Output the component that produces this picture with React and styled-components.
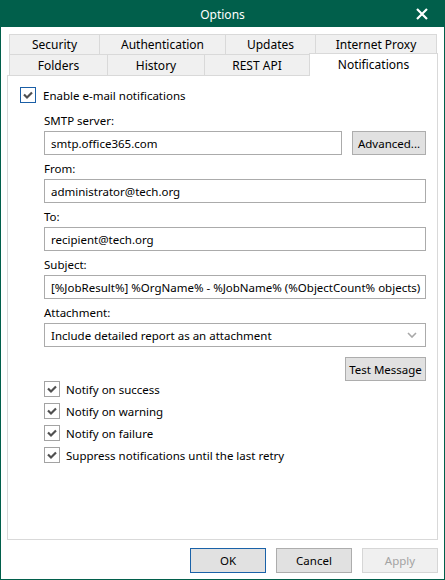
import React from "react";
import styled, { createGlobalStyle } from "styled-components";

const Global = createGlobalStyle`
  html, body { margin: 0; padding: 0; background: #ffffff; }
  body { font-family: "Noto Sans", "Open Sans", sans-serif; font-size: 11.5px; color: #000; }
  * { box-sizing: border-box; }
`;

const topTabs = [
  { label: "Security", w: 91 },
  { label: "Authentication", w: 127 },
  { label: "Updates", w: 91 },
  { label: "Internet Proxy", w: 122 },
];

const bottomTabs = [
  { label: "Folders", w: 99 },
  { label: "History", w: 98 },
  { label: "REST API", w: 106 },
  { label: "Notifications", w: 129, active: true },
];

const notifyOptions = [
  "Notify on success",
  "Notify on warning",
  "Notify on failure",
  "Suppress notifications until the last retry",
];

const Check = ({ focused }) => (
  <Box $focused={focused}>
    <svg width="14" height="14" viewBox="0 0 14 14">
      <polyline points="3,6.5 6,9.5 11,4.5" fill="none" stroke="#505050" strokeWidth="2.2" />
    </svg>
  </Box>
);

const App = () => {
  return (
    <>
      <Global />
      <Window>
        <TitleBar>
          <Title>Options</Title>
          <Close>
            <svg width="12" height="12" viewBox="0 0 12 12">
              <path d="M1 1 L11 11 M11 1 L1 11" stroke="#fff" strokeWidth="2.2" />
            </svg>
          </Close>
        </TitleBar>
        <Body>
          <Tabs>
            <TabRow>
              {topTabs.map((t) => (
                <Tab key={t.label} $w={t.w}>{t.label}</Tab>
              ))}
            </TabRow>
            <TabRow $second>
              {bottomTabs.map((t) => (
                <Tab key={t.label} $w={t.w} $second $active={t.active}>{t.label}</Tab>
              ))}
            </TabRow>
          </Tabs>
          <Panel>
            <CheckRow>
              <Check focused />
              <CheckLabel>Enable e-mail notifications</CheckLabel>
            </CheckRow>
            <Fields>
              <Label>SMTP server:</Label>
              <InlineRow>
                <Input $grow>smtp.office365.com</Input>
                <Button $w={74}>Advanced...</Button>
              </InlineRow>
              <Label>From:</Label>
              <Input>administrator@tech.org</Input>
              <Label>To:</Label>
              <Input>recipient@tech.org</Input>
              <Label>Subject:</Label>
              <Input>[%JobResult%] %OrgName% - %JobName% (%ObjectCount% objects)</Input>
              <Label>Attachment:</Label>
              <Select>
                <span>Include detailed report as an attachment</span>
                <svg width="10" height="6" viewBox="0 0 10 6">
                  <polyline points="1,1 5,5 9,1" fill="none" stroke="#a8a8a8" strokeWidth="1.6" />
                </svg>
              </Select>
              <ButtonRow>
                <Button $w={81}>Test Message</Button>
              </ButtonRow>
              <CheckList>
                {notifyOptions.map((o) => (
                  <CheckRow key={o} $list>
                    <Check />
                    <CheckLabel>{o}</CheckLabel>
                  </CheckRow>
                ))}
              </CheckList>
            </Fields>
          </Panel>
          <Footer>
            <Button $w={76} $h={25} $primary>OK</Button>
            <Button $w={76} $h={25}>Cancel</Button>
            <Button $w={76} $h={25} disabled>Apply</Button>
          </Footer>
        </Body>
      </Window>
    </>
  );
};

const Window = styled.div`
  width: 445px;
  height: 580px;
  display: flex;
  flex-direction: column;
  border: 1px solid #015f4b;
  border-top: none;
  background: #ffffff;
`;

const TitleBar = styled.div`
  height: 27px;
  margin: 0 -1px;
  background: #015f4b;
  color: #ffffff;
  display: flex;
  align-items: center;
  justify-content: center;
  position: relative;
`;

const Title = styled.div`
  font-size: 12px;
  padding-top: 1px;
`;

const Close = styled.div`
  position: absolute;
  right: 17px;
  top: 8px;
  width: 12px;
  height: 12px;
  display: flex;
`;

const Body = styled.div`
  flex: 1;
  display: flex;
  flex-direction: column;
  padding: 7px 6px 6px 6px;
`;

const Tabs = styled.div`
  display: flex;
  flex-direction: column;
  padding-left: 2px;
`;

const TabRow = styled.div`
  display: flex;
  height: 21px;
  margin-top: ${(p) => (p.$second ? -1 : 0)}px;
  align-items: flex-start;
`;

const Tab = styled.div`
  width: ${(p) => p.$w}px;
  height: ${(p) => (p.$active ? 23 : 21)}px;
  margin-top: ${(p) => (p.$active ? -1 : 0)}px;
  display: flex;
  align-items: center;
  justify-content: center;
  font-size: 12px;
  background: ${(p) => (p.$active ? "#ffffff" : "#f0f0f0")};
  border: 1px solid #d9d9d9;
  border-bottom: ${(p) => (p.$second ? "none" : "1px solid #d9d9d9")};
  position: relative;
  z-index: ${(p) => (p.$active ? 2 : 0)};
  padding-bottom: ${(p) => (p.$active ? 2 : 0)}px;
  & + & { margin-left: -1px; }
`;

const Panel = styled.div`
  flex: 1;
  border: 1px solid #d9d9d9;
  background: #ffffff;
  padding: 11px 11px 0 12px;
  display: flex;
  flex-direction: column;
`;

const CheckRow = styled.div`
  display: flex;
  align-items: center;
  gap: ${(p) => (p.$list ? 6 : 7)}px;
  height: ${(p) => (p.$list ? 22 : 16)}px;
`;

const Box = styled.div`
  width: 16px;
  height: 16px;
  border: 1px solid ${(p) => (p.$focused ? "#1b5fa6" : "#a3a3a3")};
  background: #ffffff;
  display: flex;
  align-items: center;
  justify-content: center;
  flex-shrink: 0;
`;

const CheckLabel = styled.span`
  white-space: nowrap;
`;

const Fields = styled.div`
  display: flex;
  flex-direction: column;
  padding-left: 24px;
  margin-top: 4px;
`;

const Label = styled.div`
  line-height: 16px;
  margin: 6px 0 2px;
`;

const InlineRow = styled.div`
  display: flex;
  gap: 10px;
`;

const Input = styled.div`
  flex: ${(p) => (p.$grow ? 1 : "none")};
  height: 24px;
  border: 1px solid #ababab;
  padding: 0 6px;
  display: flex;
  align-items: center;
  white-space: nowrap;
  overflow: hidden;
`;

const Select = styled(Input)`
  justify-content: space-between;
  padding-right: 8px;
`;

const ButtonRow = styled.div`
  display: flex;
  justify-content: flex-end;
  margin-top: 10px;
`;

const Button = styled.button`
  width: ${(p) => p.$w}px;
  height: ${(p) => p.$h || 24}px;
  font: inherit;
  padding: 0;
  color: ${(p) => (p.disabled ? "#a3a3a3" : "#000")};
  background: ${(p) => (p.disabled ? "#f0f0f0" : "#e1e1e1")};
  border: 1px solid ${(p) => (p.$primary ? "#1a62a8" : p.disabled ? "#d6d6d6" : "#adadad")};
  display: flex;
  align-items: center;
  justify-content: center;
  flex-shrink: 0;
`;

const CheckList = styled.div`
  display: flex;
  flex-direction: column;
  margin-top: -3px;
`;

const Footer = styled.div`
  display: flex;
  justify-content: flex-end;
  gap: 10px;
  margin-top: 8px;
`;

export default App;
